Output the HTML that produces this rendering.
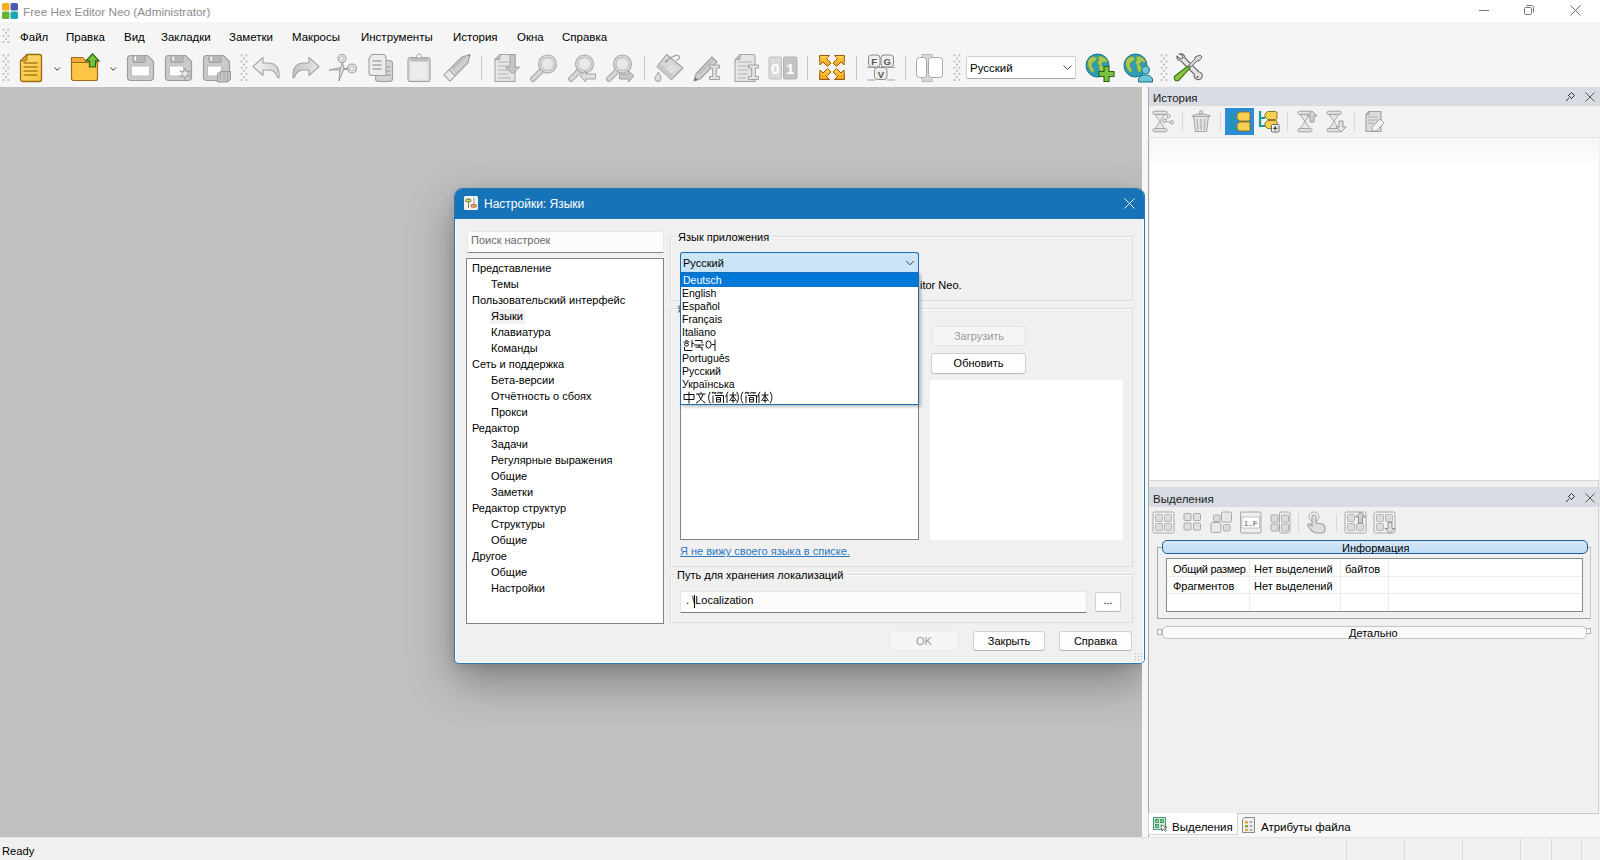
<!DOCTYPE html>
<html><head><meta charset="utf-8">
<style>
*{box-sizing:border-box;margin:0;padding:0}
html,body{width:1600px;height:860px;overflow:hidden;background:#f0f0f0;font-family:"Liberation Sans",sans-serif;font-size:11px;color:#000}
.a{position:absolute}
.t{position:absolute;white-space:nowrap;line-height:12px}
svg{position:absolute;overflow:visible}
.m{position:absolute;white-space:nowrap;line-height:12px;font-size:11.5px;top:31px}
.tr{position:absolute;white-space:nowrap;line-height:12px;font-size:11px}
.btn{position:absolute;background:#fdfdfd;border:1px solid #d0d0d0;border-bottom-color:#b8b8b8;border-radius:3px;text-align:center;font-size:11px;line-height:18px}
.sep{position:absolute;width:1px;background:#c8c8c8}
.grip{position:absolute;width:6px;background-image:radial-gradient(circle,#c4c4c4 1px,transparent 1.3px);background-size:3px 4px}
.dd{position:absolute;left:2px;white-space:nowrap;font-size:10.5px;line-height:13px;height:13px}
</style></head><body>
<!-- ===== title bar ===== -->
<div class="a" style="left:0;top:0;width:1600px;height:22px;background:#fff"></div>
<svg style="left:2px;top:3px" width="16" height="16" viewBox="0 0 16 16">
<rect x="0" y="0" width="7.5" height="7.5" rx="1.5" fill="#f0b020"/>
<rect x="8.5" y="0" width="7.5" height="7.5" rx="1.5" fill="#4a5cb0"/>
<rect x="0" y="8.5" width="7.5" height="7.5" rx="1.5" fill="#6ab033"/>
<rect x="8.5" y="8.5" width="7.5" height="7.5" rx="1.5" fill="#1aa8b8"/>
</svg>
<div class="t" style="left:23px;top:6px;font-size:11.75px;color:#8c8c8c">Free Hex Editor Neo (Administrator)</div>
<svg style="left:1479px;top:10px" width="12" height="2"><rect x="0" y="0" width="10" height="1" fill="#777"/></svg>
<svg style="left:1523px;top:4px" width="12" height="12" viewBox="0 0 12 12"><rect x="1.5" y="3.5" width="7" height="7" rx="1" fill="none" stroke="#777"/><path d="M3.5 1.5h5a2 2 0 0 1 2 2v5" fill="none" stroke="#777"/></svg>
<svg style="left:1570px;top:5px" width="12" height="12" viewBox="0 0 12 12"><path d="M0.5 0.5l10 10M10.5 0.5l-10 10" stroke="#666" stroke-width="1"/></svg>

<!-- ===== menu bar ===== -->
<div class="a" style="left:0;top:22px;width:1600px;height:65px;background:#f5f5f5"></div>
<div class="m" style="left:20px">Файл</div>
<div class="m" style="left:66px">Правка</div>
<div class="m" style="left:124px">Вид</div>
<div class="m" style="left:161px">Закладки</div>
<div class="m" style="left:229px">Заметки</div>
<div class="m" style="left:292px">Макросы</div>
<div class="m" style="left:361px">Инструменты</div>
<div class="m" style="left:453px">История</div>
<div class="m" style="left:517px">Окна</div>
<div class="m" style="left:562px">Справка</div>

<!-- ===== toolbar ===== -->
<!-- grippers -->
<svg style="left:0px;top:22px" width="10" height="28"><g fill="#c4c4c4"><rect x="2.5" y="6.6" width="2" height="2"/><rect x="7.3" y="6.6" width="2" height="2"/><rect x="5" y="9.7" width="2" height="2"/><rect x="2.5" y="12.8" width="2" height="2"/><rect x="7.3" y="12.8" width="2" height="2"/><rect x="5" y="15.9" width="2" height="2"/><rect x="2.5" y="19.0" width="2" height="2"/><rect x="7.3" y="19.0" width="2" height="2"/></g></svg>
<svg style="left:0px;top:50px" width="10" height="34"><g fill="#c4c4c4"><rect x="2.5" y="4.3" width="2" height="2"/><rect x="7.3" y="4.3" width="2" height="2"/><rect x="5" y="7.4" width="2" height="2"/><rect x="2.5" y="10.5" width="2" height="2"/><rect x="7.3" y="10.5" width="2" height="2"/><rect x="5" y="13.6" width="2" height="2"/><rect x="2.5" y="16.7" width="2" height="2"/><rect x="7.3" y="16.7" width="2" height="2"/><rect x="5" y="19.8" width="2" height="2"/><rect x="2.5" y="22.9" width="2" height="2"/><rect x="7.3" y="22.9" width="2" height="2"/><rect x="5" y="26.0" width="2" height="2"/><rect x="2.5" y="29.1" width="2" height="2"/><rect x="7.3" y="29.1" width="2" height="2"/></g></svg>
<svg style="left:238px;top:50px" width="10" height="34"><g fill="#c4c4c4"><rect x="2.5" y="4.3" width="2" height="2"/><rect x="7.3" y="4.3" width="2" height="2"/><rect x="5" y="7.4" width="2" height="2"/><rect x="2.5" y="10.5" width="2" height="2"/><rect x="7.3" y="10.5" width="2" height="2"/><rect x="5" y="13.6" width="2" height="2"/><rect x="2.5" y="16.7" width="2" height="2"/><rect x="7.3" y="16.7" width="2" height="2"/><rect x="5" y="19.8" width="2" height="2"/><rect x="2.5" y="22.9" width="2" height="2"/><rect x="7.3" y="22.9" width="2" height="2"/><rect x="5" y="26.0" width="2" height="2"/><rect x="2.5" y="29.1" width="2" height="2"/><rect x="7.3" y="29.1" width="2" height="2"/></g></svg>
<svg style="left:951px;top:50px" width="10" height="34"><g fill="#c4c4c4"><rect x="2.5" y="4.3" width="2" height="2"/><rect x="7.3" y="4.3" width="2" height="2"/><rect x="5" y="7.4" width="2" height="2"/><rect x="2.5" y="10.5" width="2" height="2"/><rect x="7.3" y="10.5" width="2" height="2"/><rect x="5" y="13.6" width="2" height="2"/><rect x="2.5" y="16.7" width="2" height="2"/><rect x="7.3" y="16.7" width="2" height="2"/><rect x="5" y="19.8" width="2" height="2"/><rect x="2.5" y="22.9" width="2" height="2"/><rect x="7.3" y="22.9" width="2" height="2"/><rect x="5" y="26.0" width="2" height="2"/><rect x="2.5" y="29.1" width="2" height="2"/><rect x="7.3" y="29.1" width="2" height="2"/></g></svg>
<svg style="left:1158px;top:50px" width="10" height="34"><g fill="#c4c4c4"><rect x="2.5" y="4.3" width="2" height="2"/><rect x="7.3" y="4.3" width="2" height="2"/><rect x="5" y="7.4" width="2" height="2"/><rect x="2.5" y="10.5" width="2" height="2"/><rect x="7.3" y="10.5" width="2" height="2"/><rect x="5" y="13.6" width="2" height="2"/><rect x="2.5" y="16.7" width="2" height="2"/><rect x="7.3" y="16.7" width="2" height="2"/><rect x="5" y="19.8" width="2" height="2"/><rect x="2.5" y="22.9" width="2" height="2"/><rect x="7.3" y="22.9" width="2" height="2"/><rect x="5" y="26.0" width="2" height="2"/><rect x="2.5" y="29.1" width="2" height="2"/><rect x="7.3" y="29.1" width="2" height="2"/></g></svg>
<!-- separators -->
<div class="sep" style="left:481px;top:56px;height:24px"></div>
<div class="sep" style="left:644px;top:56px;height:24px"></div>
<div class="sep" style="left:807px;top:56px;height:24px"></div>
<div class="sep" style="left:856px;top:56px;height:24px"></div>
<div class="sep" style="left:905px;top:56px;height:24px"></div>

<!-- new doc -->
<svg style="left:18px;top:53px" width="26" height="30" viewBox="0 0 26 30">
<defs><linearGradient id="gy" x1="0" y1="0" x2="1" y2="1"><stop offset="0" stop-color="#fde07a"/><stop offset="1" stop-color="#f7c23c"/></linearGradient></defs>
<path d="M9 1.5h12.5a2 2 0 0 1 2 2v23a2 2 0 0 1-2 2h-17a2 2 0 0 1-2-2v-18.5z" fill="url(#gy)" stroke="#9a6c12" stroke-width="1.3"/>
<path d="M9 1.5v5a1.5 1.5 0 0 1-1.5 1.5h-5z" fill="#d9a030" stroke="#9a6c12" stroke-width="1"/>
<path d="M5.5 10h14M5.5 14h14M5.5 18h14M5.5 22h14" stroke="#b07c18" stroke-width="1.6"/>
</svg>
<svg style="left:54px;top:67px" width="7" height="5"><path d="M0.5 0.5l2.8 2.8l2.8-2.8" fill="none" stroke="#222" stroke-width="0.9"/></svg>
<!-- open folder -->
<svg style="left:70px;top:53px" width="30" height="29" viewBox="0 0 30 29">
<path d="M1.5 4.5h11l3 3h12v18a2 2 0 0 1-2 2h-22a2 2 0 0 1-2-2z" fill="#fbc646" stroke="#9a6c12" stroke-width="1.2"/>
<path d="M1.5 4.5h11l3 3h12v2h-26z" fill="#f2a93a" stroke="#9a6c12" stroke-width="1"/>
<path d="M22.5 0.8l6.5 7h-3.5v6.2h-6v-6.2h-3.5z" fill="#78c23a" stroke="#2a6010" stroke-width="1.2"/>
</svg>
<svg style="left:110px;top:67px" width="7" height="5"><path d="M0.5 0.5l2.8 2.8l2.8-2.8" fill="none" stroke="#222" stroke-width="0.9"/></svg>
<!-- save -->
<svg style="left:127px;top:54px" width="28" height="28" viewBox="0 0 28 28">
<path d="M3.5 1.5h17l6 6v16a3 3 0 0 1-3 3h-20a3 3 0 0 1-3-3v-19a3 3 0 0 1 3-3z" fill="#cacaca" stroke="#9c9c9c" stroke-width="1.2"/>
<path d="M6 1.5h12v6a1 1 0 0 1-1 1h-10a1 1 0 0 1-1-1z" fill="#b8b8b8" stroke="#a0a0a0"/>
<rect x="7.5" y="2.5" width="1.5" height="4" fill="#fff"/>
<rect x="4.5" y="12" width="18" height="10" fill="#fff" stroke="#bdbdbd"/>
</svg>
<!-- save as -->
<svg style="left:165px;top:54px" width="28" height="28" viewBox="0 0 28 28">
<path d="M3.5 1.5h17l6 6v16a3 3 0 0 1-3 3h-20a3 3 0 0 1-3-3v-19a3 3 0 0 1 3-3z" fill="#cacaca" stroke="#9c9c9c" stroke-width="1.2"/>
<path d="M6 1.5h12v6a1 1 0 0 1-1 1h-10a1 1 0 0 1-1-1z" fill="#b8b8b8" stroke="#a0a0a0"/>
<rect x="7.5" y="2.5" width="1.5" height="4" fill="#fff"/>
<rect x="4.5" y="12" width="14" height="10" fill="#fff" stroke="#bdbdbd"/>
<path d="M20 14l1.3 3.8l3.9-1l-2.8 2.9l2.8 2.9l-3.9-1l-1.3 3.8l-1.3-3.8l-3.9 1l2.8-2.9l-2.8-2.9l3.9 1z" fill="#e6e6e6" stroke="#9a9a9a" stroke-width="0.9"/>
</svg>
<!-- save all -->
<svg style="left:203px;top:54px" width="30" height="29" viewBox="0 0 30 29">
<path d="M3.5 1.5h17l6 6v16a3 3 0 0 1-3 3h-20a3 3 0 0 1-3-3v-19a3 3 0 0 1 3-3z" fill="#cacaca" stroke="#9c9c9c" stroke-width="1.2"/>
<path d="M6 1.5h12v6a1 1 0 0 1-1 1h-10a1 1 0 0 1-1-1z" fill="#b8b8b8" stroke="#a0a0a0"/>
<rect x="7.5" y="2.5" width="1.5" height="4" fill="#fff"/>
<rect x="4.5" y="12" width="14" height="10" fill="#fff" stroke="#bdbdbd"/>
<path d="M14.5 19.5l3-2h10v8l-3 2.5h-10z" fill="#c4c4c4" stroke="#9a9a9a"/><path d="M17.5 17.5v8M21 17.5v8M24.5 17.5v10" stroke="#a8a8a8"/>
</svg>
<!-- undo -->
<svg style="left:252px;top:56px" width="30" height="23" viewBox="0 0 30 23">
<defs><linearGradient id="gu" x1="0" y1="0" x2="1" y2="0"><stop offset="0" stop-color="#f2f2f2"/><stop offset="1" stop-color="#d6d6d6"/></linearGradient></defs>
<path d="M1 10.5l10-9v5.5h6a10 10 0 0 1 10 10v5l-2 -1.5a8 8 0 0 0-8-6.5h-6v5.5z" fill="url(#gu)" stroke="#a4a4a4" stroke-width="1.1" stroke-linejoin="round"/>
</svg>
<!-- redo -->
<svg style="left:290px;top:56px" width="30" height="23" viewBox="0 0 30 23">
<defs><linearGradient id="gr" x1="0" y1="0" x2="1" y2="0"><stop offset="0" stop-color="#c4c4c4"/><stop offset="1" stop-color="#e8e8e8"/></linearGradient></defs>
<path d="M29 10.5l-10-9v5.5h-6a10 10 0 0 0-10 10v5l2-1.5a8 8 0 0 1 8-6.5h6v5.5z" fill="url(#gr)" stroke="#a4a4a4" stroke-width="1.1" stroke-linejoin="round"/>
</svg>
<!-- scissors -->
<svg style="left:328px;top:53px" width="30" height="29" viewBox="0 0 30 29">
<circle cx="14" cy="5.5" r="4" fill="#e6e6e6" stroke="#a0a0a0" stroke-width="1.1"/><circle cx="14" cy="5.5" r="1.8" fill="#fff" stroke="#a8a8a8" stroke-width="0.8"/>
<circle cx="24" cy="15.5" r="4.5" fill="#e6e6e6" stroke="#a0a0a0" stroke-width="1.1"/><circle cx="24" cy="15.5" r="2" fill="#fff" stroke="#a8a8a8" stroke-width="0.8"/>
<path d="M1 17l13-2.5l6.5 1.5l-8 1z" fill="#e0e0e0" stroke="#9c9c9c" stroke-width="1"/>
<path d="M14.5 9.5l1.5 6l-5 12.5l1-12z" fill="#e0e0e0" stroke="#9c9c9c" stroke-width="1"/>
</svg>
<!-- copy -->
<svg style="left:367px;top:53px" width="28" height="30" viewBox="0 0 28 30">
<path d="M11.5 7.5h11a3 3 0 0 1 3 3v15a3 3 0 0 1-3 3h-11a3 3 0 0 1-3-3z" fill="#d4d4d4" stroke="#a0a0a0" stroke-width="1.1"/>
<path d="M5 1.5h11a3 3 0 0 1 3 3v18h-14a3 3 0 0 1-3-3v-14z" fill="#ececec" stroke="#a0a0a0" stroke-width="1.1"/>
<path d="M5.5 8h9M5.5 12h9M5.5 16h9M19.5 14h4M19.5 18h4M19.5 22h4" stroke="#a8a8a8" stroke-width="1.3"/>
</svg>
<!-- clipboard -->
<svg style="left:407px;top:53px" width="24" height="30" viewBox="0 0 24 30">
<path d="M3.5 4.5h17a2.5 2.5 0 0 1 2.5 2.5v19a2.5 2.5 0 0 1-2.5 2.5h-17a2.5 2.5 0 0 1-2.5-2.5v-19a2.5 2.5 0 0 1 2.5-2.5z" fill="#dedede" stroke="#a0a0a0" stroke-width="1.1"/>
<rect x="3.5" y="8.5" width="17" height="18" fill="#ececec"/>
<path d="M3 5h18v3.5h-18z" fill="#bdbdbd"/>
<circle cx="12" cy="3.2" r="2.2" fill="#fff" stroke="#a0a0a0"/>
</svg>
<!-- pencil -->
<svg style="left:442px;top:53px" width="30" height="30" viewBox="0 0 30 30">
<path d="M8 28l-6-6l18-18l8-2.5l-2 8z" fill="#d0d0d0" stroke="#a0a0a0" stroke-width="1.1" stroke-linejoin="round"/>
<path d="M2 22l6 6l5-5l-6-6z" fill="#e8e8e8" stroke="#a0a0a0" stroke-width="1"/>
<path d="M26 2.5l2-0.5l-0.5 2z" fill="#777"/>
<path d="M11 16l12-12" stroke="#b8b8b8" stroke-width="1.2"/>
</svg>
<!-- doc arrow -->
<svg style="left:493px;top:53px" width="29" height="30" viewBox="0 0 29 30">
<path d="M7 1.5h15v27h-20v-22z" fill="#e4e4e4" stroke="#a4a4a4" stroke-width="1.1"/>
<path d="M7 1.5v5h-5z" fill="#c8c8c8" stroke="#a4a4a4"/>
<path d="M5 9h11M5 13h11M5 17h11M5 21h11M5 25h13" stroke="#b4b4b4" stroke-width="1.2"/>
<path d="M17 1.5h5v12.5h4.5l-7 7l-7-7h4.5z" fill="#c6c6c6" stroke="#a0a0a0" stroke-width="1"/>
</svg>
<!-- find -->
<svg style="left:529px;top:53px" width="30" height="30" viewBox="0 0 30 30">
<path d="M11.5 18.5L4 26" stroke="#a4a4a4" stroke-width="5.6" stroke-linecap="round"/><path d="M11.5 18.5L4 26" stroke="#d8d8d8" stroke-width="3.6" stroke-linecap="round"/>
<circle cx="18.5" cy="11" r="9" fill="#dcdcdc" stroke="#a8a8a8" stroke-width="1.1"/>
<circle cx="18.5" cy="11" r="6.5" fill="#e8e8e8" stroke="#b4b4b4" stroke-width="1"/>
</svg>
<!-- find prev -->
<svg style="left:567px;top:53px" width="30" height="30" viewBox="0 0 30 30">
<path d="M11.5 18.5L4 26" stroke="#a4a4a4" stroke-width="5.6" stroke-linecap="round"/><path d="M11.5 18.5L4 26" stroke="#d8d8d8" stroke-width="3.6" stroke-linecap="round"/>
<circle cx="17.5" cy="11" r="9" fill="#dcdcdc" stroke="#a8a8a8" stroke-width="1.1"/>
<circle cx="17.5" cy="11" r="6.5" fill="#e8e8e8" stroke="#b4b4b4" stroke-width="1"/>
<path d="M13 23l5.5-5v3h10v5h-10v3z" fill="#dedede" stroke="#a4a4a4" stroke-width="1"/>
</svg>
<!-- find next -->
<svg style="left:605px;top:53px" width="30" height="30" viewBox="0 0 30 30">
<path d="M11.5 18.5L4 26" stroke="#a4a4a4" stroke-width="5.6" stroke-linecap="round"/><path d="M11.5 18.5L4 26" stroke="#d8d8d8" stroke-width="3.6" stroke-linecap="round"/>
<circle cx="17.5" cy="11" r="9" fill="#dcdcdc" stroke="#a8a8a8" stroke-width="1.1"/>
<circle cx="17.5" cy="11" r="6.5" fill="#e8e8e8" stroke="#b4b4b4" stroke-width="1"/>
<path d="M29 23l-5.5-5v3h-9v5h9v3z" fill="#c8c8c8" stroke="#a0a0a0" stroke-width="1"/>
</svg>
<!-- bucket -->
<svg style="left:654px;top:53px" width="30" height="30" viewBox="0 0 30 30">
<path d="M12.5 1.5l16.5 13.5l-11.5 11.5l-14.5-13z" fill="#d6d6d6" stroke="#a0a0a0" stroke-width="1.1" stroke-linejoin="round"/>
<path d="M3 13.5l3-3l14.5 13l-3 3z" fill="#c8c8c8"/>
<path d="M12 8.5c3-3 9-7 12-6c3 1 1 4-2 5" fill="none" stroke="#a0a0a0" stroke-width="1.1"/>
<circle cx="12" cy="8.5" r="1" fill="#888"/>
<path d="M13 17l6-5M15.5 19.5l6-5" stroke="#ececec" stroke-width="1.5"/>
<path d="M4.5 19c-2 3-3.5 5-3.5 6.5a3 3 0 0 0 6 0c0-1.5-1-3.5-2.5-6.5z" fill="#dedede" stroke="#a0a0a0" stroke-width="1"/>
</svg>
<!-- pencil I -->
<svg style="left:692px;top:53px" width="30" height="30" viewBox="0 0 30 30">
<path d="M2 28l2-7l16-17l5 5l-17 17z" fill="#d0d0d0" stroke="#a0a0a0" stroke-width="1.1" stroke-linejoin="round"/>
<path d="M2 28l1-4l3 3z" fill="#777"/>
<path d="M7 21l14-14" stroke="#b8b8b8" stroke-width="1.2"/>
<path d="M17.5 12h10v3h-3.2v8.5h3.2v3h-10v-3h3.2v-8.5h-3.2z" fill="#e4e4e4" stroke="#a0a0a0" stroke-width="1"/>
</svg>
<!-- doc I -->
<svg style="left:733px;top:53px" width="28" height="30" viewBox="0 0 28 30">
<path d="M7 1.5h13a2 2 0 0 1 2 2v25h-20v-21z" fill="#e4e4e4" stroke="#a4a4a4" stroke-width="1.1"/>
<path d="M7 1.5v5h-5z" fill="#c8c8c8" stroke="#a4a4a4"/>
<path d="M5 9h14M5 13h14M5 17h10M5 21h10M5 25h8" stroke="#b4b4b4" stroke-width="1.2"/>
<path d="M15.5 12h10v3h-3.2v8.5h3.2v3h-10v-3h3.2v-8.5h-3.2z" fill="#e4e4e4" stroke="#a0a0a0" stroke-width="1"/>
</svg>
<!-- 01 -->
<svg style="left:768px;top:56px" width="30" height="24" viewBox="0 0 30 24">
<rect x="1" y="1" width="12.5" height="22" rx="1.5" fill="#dadada" stroke="#c0c0c0"/>
<rect x="15.5" y="1" width="13.5" height="22" rx="1.5" fill="#c4c4c4" stroke="#b0b0b0"/>
<text x="7.2" y="17.5" font-family="Liberation Sans" font-weight="bold" font-size="15" fill="#fff" text-anchor="middle">0</text>
<text x="22.2" y="17.5" font-family="Liberation Sans" font-weight="bold" font-size="15" fill="#fff" text-anchor="middle">1</text>
</svg>
<!-- orange arrows -->
<svg style="left:818px;top:54px" width="28" height="27" viewBox="0 0 28 27">
<defs><linearGradient id="go" x1="0" y1="0" x2="0" y2="1"><stop offset="0" stop-color="#ffd34a"/><stop offset="1" stop-color="#f4a010"/></linearGradient></defs>
<g fill="url(#go)" stroke="#9a5a10" stroke-width="1" stroke-linejoin="round">
<path d="M1.5 1.5h10l-3 3l4.5 4.5l-3.5 3.5l-4.5-4.5l-3 3z"/>
<path d="M26.5 1.5h-10l3 3l-4.5 4.5l3.5 3.5l4.5-4.5l3 3z"/>
<path d="M1.5 25.5h10l-3-3l4.5-4.5l-3.5-3.5l-4.5 4.5l-3-3z"/>
<path d="M26.5 25.5h-10l3-3l-4.5-4.5l3.5-3.5l4.5 4.5l3-3z"/>
</g>
</svg>
<!-- FGV -->
<svg style="left:867px;top:54px" width="28" height="28" viewBox="0 0 28 28">
<rect x="1.5" y="1" width="11.5" height="12" rx="3" fill="#eeeeee" stroke="#8a8a8a"/>
<rect x="14" y="1" width="12.5" height="12" rx="3" fill="#eeeeee" stroke="#8a8a8a"/>
<rect x="7.5" y="13.5" width="12.5" height="12" rx="3" fill="#eeeeee" stroke="#8a8a8a"/>
<text x="7.2" y="11" font-family="Liberation Sans" font-weight="bold" font-size="9.5" fill="#555" text-anchor="middle">F</text>
<text x="20.2" y="11" font-family="Liberation Sans" font-weight="bold" font-size="9.5" fill="#555" text-anchor="middle">G</text>
<text x="13.8" y="23.5" font-family="Liberation Sans" font-weight="bold" font-size="9.5" fill="#555" text-anchor="middle">V</text>
<path d="M0 13.5h8M20 13.5h8M0 26h8M20 26h8" stroke="#9a9a9a" stroke-width="0.9"/>
</svg>
<!-- split -->
<svg style="left:915px;top:53px" width="30" height="30" viewBox="0 0 30 30">
<rect x="7" y="1.5" width="10" height="27" fill="#d8d8d8" stroke="#b8b8b8"/>
<rect x="1.5" y="4.5" width="10" height="20" rx="3" fill="#fff" stroke="#a8a8a8"/>
<rect x="13.5" y="4.5" width="14" height="20" rx="3" fill="#fff" stroke="#a8a8a8"/>
</svg>
<!-- combo -->
<div class="a" style="left:966px;top:56px;width:110px;height:23px;background:#fff;border:1px solid #d0d0d0;border-bottom-color:#a8a8a8;border-radius:2px"></div>
<div class="t" style="left:970px;top:62px;font-size:11.5px">Русский</div>
<svg style="left:1063px;top:65px" width="9" height="6"><path d="M0.5 0.5l4 4l4-4" fill="none" stroke="#555" stroke-width="1"/></svg>
<!-- globe + -->
<svg style="left:1085px;top:53px" width="30" height="30" viewBox="0 0 30 30">
<circle cx="12.5" cy="12.5" r="11.5" fill="#2aa0b8" stroke="#1a7090" stroke-width="1"/>
<path d="M5 5c3-2 6-2 7 1c-1 3-5 2-5 6c0 3 3 4 2 7c-2 1-4-1-5-4c-2-4-2-7 1-10zM14 3c4 0 7 2 9 6c-2 1-4-1-6 1c-1 2 1 4 3 5c-1 3-3 5-5 4c0-3-2-4-1-7c-2-1-2-4 0-5c-1-2-1-3 0-4z" fill="#a8c850" stroke="#6a9030" stroke-width="0.6"/>
<path d="M19 13.5h5v5h5v5h-5v5h-5v-5h-5v-5h5z" fill="#78c43c" stroke="#2a6010" stroke-width="1.1" stroke-linejoin="round"/>
</svg>
<!-- globe person -->
<svg style="left:1123px;top:53px" width="30" height="30" viewBox="0 0 30 30">
<circle cx="12.5" cy="12.5" r="11.5" fill="#2aa0b8" stroke="#1a7090" stroke-width="1"/>
<path d="M5 5c3-2 6-2 7 1c-1 3-5 2-5 6c0 3 3 4 2 7c-2 1-4-1-5-4c-2-4-2-7 1-10zM14 3c4 0 7 2 9 6c-2 1-4-1-6 1c-1 2 1 4 3 5c-1 3-3 5-5 4c0-3-2-4-1-7c-2-1-2-4 0-5c-1-2-1-3 0-4z" fill="#a8c850" stroke="#6a9030" stroke-width="0.6"/>
<circle cx="22.5" cy="17" r="4" fill="#6cc8d8" stroke="#1a7080" stroke-width="1"/>
<path d="M15.5 29v-2c0-3 3-5 7-5s7 2 7 5v2z" fill="#6cc8d8" stroke="#1a7080" stroke-width="1"/>
</svg>
<!-- tools -->
<svg style="left:1173px;top:53px" width="30" height="30" viewBox="0 0 30 30">
<path d="M4 3l3 3l3-1l-1-3l-3-1c3-1 6 1 6 4l14 14c2 0 4 2 3 5c-1 3-4 3-6 2c-2-1-2-3-2-5l-13-13c-3 0-5-3-4-5z" fill="#e4e4e4" stroke="#6a6a6a" stroke-width="1.1" stroke-linejoin="round"/>
<path d="M27 2l2 2l-3 4l-2 0l-6 6l-2-2l6-6l0-2z" fill="#d8d8d8" stroke="#6a6a6a" stroke-width="1"/>
<path d="M15 13l2 2l-11 12c-1 1-3 1-4 0s-1-3 0-4z" fill="#8cc63f" stroke="#3a7010" stroke-width="1.1"/>
<circle cx="24.5" cy="24" r="1" fill="#555"/>
</svg>


<!-- ===== MDI ===== -->
<div class="a" style="left:0;top:87px;width:1142px;height:750px;background:#c0c0c0;overflow:hidden">
  <div class="a" style="left:454px;top:101px;width:690px;height:475px;border-radius:8px;box-shadow:0 18px 44px 0 rgba(0,0,0,0.34),0 3px 10px rgba(0,0,0,0.12)"></div>
</div>

<!-- ===== right dock ===== -->
<!-- dock container -->
<div class="a" style="left:1142px;top:87px;width:458px;height:750px;background:#f0f0f0"></div>
<div class="a" style="left:1142px;top:87px;width:6px;height:750px;background:#f6f6f6"></div>
<div class="a" style="left:1148px;top:87px;width:1px;height:750px;background:#a8a8a8"></div>
<div class="a" style="left:1598px;top:87px;width:1px;height:727px;background:#d0d0d0"></div>
<!-- История header -->
<div class="a" style="left:1149px;top:87px;width:451px;height:19px;background:#d7dce3"></div>
<div class="t" style="left:1153px;top:92px;font-size:11.5px;color:#1a1a1a">История</div>
<svg style="left:1565px;top:91px" width="11" height="11" viewBox="0 0 11 11"><path d="M1 10l3-3M3.5 4.5l3-3l3 3l-3 3z M3 4l4 4" fill="none" stroke="#333" stroke-width="1"/></svg>
<svg style="left:1585px;top:92px" width="10" height="10" viewBox="0 0 10 10"><path d="M0.5 0.5l9 9M9.5 0.5l-9 9" stroke="#555" stroke-width="1"/></svg>
<!-- toolbar -->
<div class="a" style="left:1149px;top:106px;width:451px;height:31px;background:#f2f2f2"></div>
<div class="a" style="left:1148px;top:137px;width:451px;height:1px;background:#e4e4e4"></div>
<div class="sep" style="left:1182px;top:112px;height:19px;background:#d8d8d8"></div>
<div class="sep" style="left:1220px;top:112px;height:19px;background:#d8d8d8"></div>
<div class="sep" style="left:1287px;top:112px;height:19px;background:#d8d8d8"></div>
<div class="sep" style="left:1354px;top:112px;height:19px;background:#d8d8d8"></div>
<!-- hourglass nodes -->
<svg style="left:1152px;top:110px" width="23" height="23" viewBox="0 0 23 23">
<path d="M2.8 4.2h10.4l-5.2 7.3zM2.8 18.8h10.4l-5.2-7.3z" fill="#e6e6e6" stroke="#a8a8a8" stroke-width="1"/><rect x="1" y="1.2" width="14" height="3.2" rx="1.3" fill="#e2e2e2" stroke="#a0a0a0"/><rect x="1" y="18.6" width="14" height="3.2" rx="1.3" fill="#e2e2e2" stroke="#a0a0a0"/>
<path d="M16.5 6.5l-3.5 4.5l6 1.5" fill="none" stroke="#a8a8a8"/>
<circle cx="16.5" cy="6" r="1.7" fill="#f0f0f0" stroke="#a0a0a0"/><circle cx="12.5" cy="11" r="1.7" fill="#f0f0f0" stroke="#a0a0a0"/><circle cx="19.8" cy="12.3" r="1.7" fill="#f0f0f0" stroke="#a0a0a0"/>
</svg>
<!-- trash -->
<svg style="left:1191px;top:110px" width="21" height="23" viewBox="0 0 21 23">
<circle cx="10" cy="2.5" r="1.8" fill="#dcdcdc" stroke="#a8a8a8"/>
<path d="M0.8 6.5c1-3 18-3 19 0z" fill="#e0e0e0" stroke="#a8a8a8"/>
<path d="M2.5 6.5l2 15h11l2-15z" fill="#e4e4e4" stroke="#a8a8a8" stroke-width="1.1"/>
<path d="M6 9l1 11M10 9v11M14 9l-1 11" stroke="#b0b0b0" stroke-width="1.2"/>
</svg>
<!-- selected tree -->
<div class="a" style="left:1225px;top:108px;width:29px;height:27px;background:#2d8ad5"></div>
<svg style="left:1229px;top:111px" width="22" height="22" viewBox="0 0 22 22">
<path d="M3 1v17h5" fill="none" stroke="#1a9a9a" stroke-width="2.2"/><path d="M3 8h5" stroke="#1a9a9a" stroke-width="2"/>
<path d="M8 3.5l2.5-2.5h9a1.5 1.5 0 0 1 1.5 1.5v6a1.5 1.5 0 0 1-1.5 1.5h-9l-2.5-2.5z" fill="#f8d050" stroke="#8a6a10" stroke-width="0.9"/>
<path d="M8 13.5l2.5-2.5h9a1.5 1.5 0 0 1 1.5 1.5v6a1.5 1.5 0 0 1-1.5 1.5h-9l-2.5-2.5z" fill="#f8d050" stroke="#8a6a10" stroke-width="0.9"/>
</svg>
<!-- tree plus -->
<svg style="left:1258px;top:110px" width="22" height="23" viewBox="0 0 22 23">
<path d="M2 1v15h5" fill="none" stroke="#1a9a9a" stroke-width="2.2"/><path d="M2 8h5" stroke="#1a9a9a" stroke-width="2"/>
<path d="M7 4l2.5-2.5h8a1.5 1.5 0 0 1 1.5 1.5v5a1.5 1.5 0 0 1-1.5 1.5h-8l-2.5-2.5z" fill="#f8d050" stroke="#8a6a10" stroke-width="0.9"/>
<path d="M7 13l2.5-2.5h8a1.5 1.5 0 0 1 1.5 1.5v5a1.5 1.5 0 0 1-1.5 1.5h-8l-2.5-2.5z" fill="#f8d050" stroke="#8a6a10" stroke-width="0.9"/>
<rect x="13.5" y="14.5" width="7.5" height="7.5" rx="1" fill="#f6f6f6" stroke="#666"/>
<path d="M17.2 16v4.5M15 18.2h4.5" stroke="#333" stroke-width="1.1"/>
</svg>
<!-- hourglass up -->
<svg style="left:1297px;top:110px" width="21" height="23" viewBox="0 0 21 23">
<path d="M2.8 4.2h10.4l-5.2 7.3zM2.8 18.8h10.4l-5.2-7.3z" fill="#e6e6e6" stroke="#a8a8a8" stroke-width="1"/><rect x="1" y="1.2" width="14" height="3.2" rx="1.3" fill="#e2e2e2" stroke="#a0a0a0"/><rect x="1" y="18.6" width="14" height="3.2" rx="1.3" fill="#e2e2e2" stroke="#a0a0a0"/>
<path d="M15 1l5 5h-3v6h-4v-6h-3z" fill="#d0d0d0" stroke="#9a9a9a"/>
</svg>
<!-- hourglass down -->
<svg style="left:1326px;top:110px" width="21" height="23" viewBox="0 0 21 23">
<path d="M2.8 4.2h10.4l-5.2 7.3zM2.8 18.8h10.4l-5.2-7.3z" fill="#e6e6e6" stroke="#a8a8a8" stroke-width="1"/><rect x="1" y="1.2" width="14" height="3.2" rx="1.3" fill="#e2e2e2" stroke="#a0a0a0"/><rect x="1" y="18.6" width="14" height="3.2" rx="1.3" fill="#e2e2e2" stroke="#a0a0a0"/>
<path d="M15 22l5-5h-3v-6h-4v6h-3z" fill="#e4e4e4" stroke="#9a9a9a"/>
</svg>
<!-- doc eraser -->
<svg style="left:1364px;top:110px" width="21" height="23" viewBox="0 0 21 23">
<path d="M5 1.5h12v20h-15v-17z" fill="#dcdcdc" stroke="#a0a0a0" stroke-width="1.1"/>
<path d="M5 1.5v3h-3z" fill="#c0c0c0" stroke="#a0a0a0"/>
<path d="M4 7h10M4 10h10M4 13h6" stroke="#b0b0b0"/>
<path d="M8 17l8-8l4 4l-8 8h-4z" fill="#f4f4f4" stroke="#a0a0a0"/>
</svg>

<!-- white content -->
<div class="a" style="left:1150px;top:138px;width:449px;height:343px;background:linear-gradient(#f7f7f7 0,#fbfbfb 20px,#fff 28px,#fff)"></div>
<div class="a" style="left:1149px;top:480px;width:450px;height:1px;background:#d4d4d4"></div>
<!-- Выделения header -->
<div class="a" style="left:1149px;top:487px;width:451px;height:20px;background:#d7dce3"></div>
<div class="t" style="left:1153px;top:493px;font-size:11.5px;color:#1a1a1a">Выделения</div>
<svg style="left:1565px;top:492px" width="11" height="11" viewBox="0 0 11 11"><path d="M1 10l3-3M3.5 4.5l3-3l3 3l-3 3z M3 4l4 4" fill="none" stroke="#333" stroke-width="1"/></svg>
<svg style="left:1585px;top:493px" width="10" height="10" viewBox="0 0 10 10"><path d="M0.5 0.5l9 9M9.5 0.5l-9 9" stroke="#555" stroke-width="1"/></svg>
<div class="sep" style="left:1298px;top:514px;height:18px;background:#d8d8d8"></div>
<div class="sep" style="left:1336px;top:514px;height:18px;background:#d8d8d8"></div>
<svg style="left:1152px;top:511px" width="23" height="23" viewBox="0 0 23 23">
<rect x="1" y="1" width="21" height="21" rx="1.5" fill="#f2f2f2" stroke="#a8a8a8"/>
<rect x="3.5" y="3.5" width="7" height="7" rx="1" fill="#dcdcdc" stroke="#b4b4b4"/><rect x="12.5" y="3.5" width="7" height="7" rx="1" fill="#dcdcdc" stroke="#b4b4b4"/>
<rect x="3.5" y="12.5" width="7" height="7" rx="1" fill="#dcdcdc" stroke="#b4b4b4"/><rect x="12.5" y="12.5" width="7" height="7" rx="1" fill="#dcdcdc" stroke="#b4b4b4"/>
</svg>
<svg style="left:1183px;top:512px" width="19" height="20" viewBox="0 0 19 20">
<rect x="1" y="1.5" width="7" height="7" rx="1" fill="#e0e0e0" stroke="#a8a8a8"/><rect x="10.5" y="1.5" width="7" height="7" rx="1" fill="#e0e0e0" stroke="#a8a8a8"/>
<rect x="1" y="11" width="7" height="7" rx="1" fill="#e0e0e0" stroke="#a8a8a8"/><rect x="10.5" y="11" width="7" height="7" rx="1" fill="#e0e0e0" stroke="#a8a8a8"/>
</svg>
<svg style="left:1210px;top:511px" width="23" height="23" viewBox="0 0 23 23">
<rect x="11.5" y="1" width="10" height="10" rx="1.5" fill="#e8e8e8" stroke="#a8a8a8"/>
<rect x="1" y="11.5" width="10" height="10" rx="1.5" fill="#e8e8e8" stroke="#a8a8a8"/>
<rect x="3.5" y="4" width="6.5" height="6.5" rx="1" fill="#dcdcdc" stroke="#b0b0b0"/><rect x="13.5" y="13.5" width="6.5" height="6.5" rx="1" fill="#dcdcdc" stroke="#b0b0b0"/>
</svg>
<svg style="left:1240px;top:511px" width="22" height="23" viewBox="0 0 22 23">
<rect x="0.5" y="1" width="20.5" height="21" rx="1" fill="#eeeeee" stroke="#a8a8a8"/>
<rect x="2" y="6" width="17.5" height="11" fill="#fff" stroke="#b0b0b0" stroke-width="0.8"/>
<text x="10.7" y="15" font-family="Liberation Sans" font-size="8" fill="#8a8a8a" text-anchor="middle" font-weight="bold">1..F</text>
</svg>
<svg style="left:1270px;top:511px" width="21" height="23" viewBox="0 0 21 23">
<rect x="9.5" y="1" width="10.5" height="21" rx="1.5" fill="#f0f0f0" stroke="#a8a8a8"/>
<rect x="1" y="4" width="7" height="7" rx="1" fill="#dcdcdc" stroke="#a8a8a8"/><rect x="11.5" y="4" width="7" height="7" rx="1" fill="#dcdcdc" stroke="#b0b0b0"/>
<rect x="1" y="13" width="7" height="7" rx="1" fill="#dcdcdc" stroke="#a8a8a8"/><rect x="11.5" y="13" width="7" height="7" rx="1" fill="#dcdcdc" stroke="#b0b0b0"/>
</svg>
<svg style="left:1307px;top:511px" width="20" height="23" viewBox="0 0 20 23">
<circle cx="7" cy="6" r="5" fill="none" stroke="#b0b0b0"/>
<path d="M5 6a2 2 0 0 1 4 0v6l6 1c2 0.5 3 2 3 4v2c0 2-2 3-4 3h-5c-2 0-4-2-5-3l-3-4c-1-1 0-3 2-2l2 2z" fill="#dedede" stroke="#a0a0a0" stroke-width="1.1"/>
</svg>
<svg style="left:1344px;top:511px" width="23" height="23" viewBox="0 0 23 23">
<rect x="1" y="1" width="21" height="21" rx="1.5" fill="#f2f2f2" stroke="#a8a8a8"/>
<rect x="3.5" y="3.5" width="7" height="7" rx="1" fill="#dcdcdc" stroke="#b4b4b4"/>
<rect x="3.5" y="12.5" width="7" height="7" rx="1" fill="#dcdcdc" stroke="#b4b4b4"/><rect x="12.5" y="12.5" width="7" height="7" rx="1" fill="#dcdcdc" stroke="#b4b4b4"/>
<path d="M16.5 1l5 5h-3v6h-4v-6h-3z" fill="#cfcfcf" stroke="#909090"/>
</svg>
<svg style="left:1373px;top:511px" width="23" height="23" viewBox="0 0 23 23">
<rect x="1" y="1" width="21" height="21" rx="1.5" fill="#f2f2f2" stroke="#a8a8a8"/>
<rect x="3.5" y="3.5" width="7" height="7" rx="1" fill="#dcdcdc" stroke="#b4b4b4"/><rect x="12.5" y="3.5" width="7" height="7" rx="1" fill="#dcdcdc" stroke="#b4b4b4"/>
<rect x="3.5" y="12.5" width="7" height="7" rx="1" fill="#dcdcdc" stroke="#b4b4b4"/>
<path d="M17 22.5l5-5h-3v-6h-4v6h-3z" fill="#dedede" stroke="#909090"/>
</svg>

<!-- Информация -->
<div class="a" style="left:1157px;top:547px;width:434px;height:72px;border:1px solid #a8a8a8;border-right-color:#c8c8c8;border-bottom-color:#a0a0a0"></div>
<div class="a" style="left:1162px;top:540px;width:426px;height:14px;background:linear-gradient(#d5e8f8,#bfdcf5);border:1px solid #1d5f9c;border-radius:5px"></div>
<div class="t" style="left:1342px;top:542px;font-size:11px">Информация</div>
<div class="a" style="left:1166px;top:558px;width:417px;height:54px;background:#fff;border:1px solid #8a8a8a"></div>
<div class="a" style="left:1167px;top:576px;width:415px;height:1px;background:#ececec"></div>
<div class="a" style="left:1167px;top:593px;width:415px;height:1px;background:#ececec"></div>
<div class="a" style="left:1249px;top:559px;width:1px;height:52px;background:#ececec"></div>
<div class="a" style="left:1340px;top:559px;width:1px;height:52px;background:#ececec"></div>
<div class="a" style="left:1388px;top:559px;width:1px;height:52px;background:#ececec"></div>
<div class="t" style="left:1173px;top:563px;font-size:11px;letter-spacing:-0.3px">Общий размер</div>
<div class="t" style="left:1254px;top:563px;font-size:11px">Нет выделений</div>
<div class="t" style="left:1345px;top:563px;font-size:11px">байтов</div>
<div class="t" style="left:1173px;top:580px;font-size:11px">Фрагментов</div>
<div class="t" style="left:1254px;top:580px;font-size:11px">Нет выделений</div>
<!-- Детально -->
<div class="a" style="left:1157px;top:629px;width:5px;height:6px;border:1px solid #b0b0b0;background:#fff"></div>
<div class="a" style="left:1586px;top:628px;width:5px;height:6px;border:1px solid #b0b0b0;background:#fff"></div>
<div class="a" style="left:1162px;top:626px;width:425px;height:13px;background:#fafafa;border:1px solid #c4c4c4;border-radius:5px"></div>
<div class="t" style="left:1349px;top:627px;font-size:11px">Детально</div>
<!-- bottom panel border + tabs -->
<div class="a" style="left:1149px;top:814px;width:451px;height:23px;background:#f7f7f7"></div>
<div class="a" style="left:1149px;top:813px;width:450px;height:1px;background:#c8c8c8"></div>
<div class="a" style="left:1148px;top:813px;width:90px;height:22px;background:#fff;border:1px solid #d4d4d4;border-top:none"></div>
<svg style="left:1153px;top:817px" width="16" height="16" viewBox="0 0 16 16"><rect x="0.5" y="0.5" width="12" height="12" fill="#cfeadb" stroke="#4a9a70"/><rect x="2.5" y="2.5" width="3" height="3" fill="#7ccf9c" stroke="#3b8a60" stroke-width="0.8"/><rect x="7.5" y="2.5" width="3" height="3" fill="#7ccf9c" stroke="#3b8a60" stroke-width="0.8"/><rect x="2.5" y="7.5" width="3" height="3" fill="#7ccf9c" stroke="#3b8a60" stroke-width="0.8"/><path d="M8 8l6 2l-2.5 1l2 2.5l-1 1l-2-2.5l-1.5 2z" fill="#fff" stroke="#555" stroke-width="0.8"/></svg>
<div class="t" style="left:1172px;top:821px;font-size:11.5px">Выделения</div>
<svg style="left:1242px;top:817px" width="14" height="16" viewBox="0 0 14 16"><path d="M0.5 2.5l2-2h10v15h-12z" fill="#f0f0f0" stroke="#888"/><rect x="3" y="4" width="3" height="2.5" fill="#e0b030"/><rect x="3" y="8" width="3" height="2.5" fill="#70b040"/><rect x="3" y="12" width="3" height="2" fill="#e0b030"/><path d="M7.5 5h3M7.5 9h3M7.5 13h3" stroke="#777"/></svg>
<div class="t" style="left:1261px;top:821px;font-size:11.5px">Атрибуты файла</div>
<!-- status bar separators -->


<!-- ===== status bar ===== -->
<div class="a" style="left:0;top:837px;width:1600px;height:23px;background:#f0f0f0"></div>
<div class="t" style="left:2px;top:845px;font-size:11.2px">Ready</div>
<div class="a" style="left:0;top:837px;width:1600px;height:1px;background:#e2e2e2"></div>
<div class="a" style="left:1346px;top:839px;width:1px;height:21px;background:#dadada"></div>
<div class="a" style="left:1404px;top:839px;width:1px;height:21px;background:#dadada"></div>
<div class="a" style="left:1462px;top:839px;width:1px;height:21px;background:#dadada"></div>
<div class="a" style="left:1520px;top:839px;width:1px;height:21px;background:#dadada"></div>
<div class="a" style="left:1551px;top:839px;width:1px;height:21px;background:#dadada"></div>
<div class="a" style="left:1581px;top:839px;width:1px;height:21px;background:#dadada"></div>


<!-- ===== dialog ===== -->
<!-- dialog frame -->
<div class="a" style="left:454px;top:188px;width:691px;height:476px;background:#f0f0f0;border:1px solid #2a76b6;border-radius:8px 8px 5px 5px;overflow:hidden">
  <div class="a" style="left:0;top:0;width:689px;height:30px;background:#1773b7"></div>
  <div class="a" style="left:0;top:30px;width:689px;height:444px;border:1px solid #fafcff;border-top:none;border-radius:0 0 4px 4px"></div>
</div>
<!-- title -->
<svg style="left:464px;top:196px" width="14" height="14" viewBox="0 0 14 14">
<rect x="0" y="0" width="14" height="14" rx="1.5" fill="#f2f2f2"/>
<rect x="4" y="2" width="1" height="10" fill="#777"/><rect x="9.5" y="1.5" width="1" height="10" fill="#999"/>
<rect x="1.5" y="3.2" width="5.5" height="2.6" rx="1.2" fill="#c8d870" stroke="#606a20" stroke-width="0.8"/>
<rect x="7" y="8.5" width="5.5" height="2.6" rx="1.2" fill="#f8b070" stroke="#8a5020" stroke-width="0.8"/>
</svg>
<div class="t" style="left:484px;top:198px;font-size:12px;color:#fff">Настройки: Языки</div>
<svg style="left:1124px;top:198px" width="11" height="11" viewBox="0 0 11 11"><path d="M0.5 0.5l10 10M10.5 0.5l-10 10" stroke="#e8f8ff" stroke-width="1"/></svg>

<!-- search -->
<div class="a" style="left:467px;top:231px;width:197px;height:22px;background:#fcfcfc;border:1px solid #e8e8e8;border-bottom:1px solid #868686;border-radius:3px 3px 0 0"></div>
<div class="tr" style="left:471px;top:234px;color:#6a6a6a">Поиск настроек</div>

<!-- tree -->
<div class="a" style="left:466px;top:258px;width:198px;height:366px;background:#fff;border:1px solid #828282"></div>
<div class="a" style="left:490px;top:309px;width:35px;height:15px;background:#f2f2f2"></div>
<div class="tr" style="left:472px;top:262px">Представление</div>
<div class="tr" style="left:491px;top:278px">Темы</div>
<div class="tr" style="left:472px;top:294px">Пользовательский интерфейс</div>
<div class="tr" style="left:491px;top:310px">Языки</div>
<div class="tr" style="left:491px;top:326px">Клавиатура</div>
<div class="tr" style="left:491px;top:342px">Команды</div>
<div class="tr" style="left:472px;top:358px">Сеть и поддержка</div>
<div class="tr" style="left:491px;top:374px">Бета-версии</div>
<div class="tr" style="left:491px;top:390px">Отчётность о сбоях</div>
<div class="tr" style="left:491px;top:406px">Прокси</div>
<div class="tr" style="left:472px;top:422px">Редактор</div>
<div class="tr" style="left:491px;top:438px">Задачи</div>
<div class="tr" style="left:491px;top:454px">Регулярные выражения</div>
<div class="tr" style="left:491px;top:470px">Общие</div>
<div class="tr" style="left:491px;top:486px">Заметки</div>
<div class="tr" style="left:472px;top:502px">Редактор структур</div>
<div class="tr" style="left:491px;top:518px">Структуры</div>
<div class="tr" style="left:491px;top:534px">Общие</div>
<div class="tr" style="left:472px;top:550px">Другое</div>
<div class="tr" style="left:491px;top:566px">Общие</div>
<div class="tr" style="left:491px;top:582px">Настройки</div>

<!-- group frames -->
<div class="a" style="left:670px;top:236px;width:463px;height:65px;border:1px solid #dcdcdc;box-shadow:inset 1px 1px 0 #fff"></div>
<div class="a" style="left:676px;top:232px;width:96px;height:10px;background:#f0f0f0"></div>
<div class="tr" style="left:678px;top:231px">Язык приложения</div>
<div class="tr" style="left:920px;top:279px">itor Neo.</div>

<div class="a" style="left:670px;top:308px;width:463px;height:259px;border:1px solid #dcdcdc;box-shadow:inset 1px 1px 0 #fff"></div>
<div class="a" style="left:670px;top:574px;width:463px;height:49px;border:1px solid #dcdcdc;box-shadow:inset 1px 1px 0 #fff"></div>
<div class="a" style="left:675px;top:570px;width:172px;height:10px;background:#f0f0f0"></div>
<div class="tr" style="left:677px;top:569px">Путь для хранения локализаций</div>

<svg style="left:677px;top:304px" width="4" height="10" viewBox="0 0 4 10"><path d="M3.5 1.5c-2 0-2.5 3-0.5 3.5M3.5 5l-2 3.5" fill="none" stroke="#222" stroke-width="1"/></svg>
<!-- list box -->
<div class="a" style="left:680px;top:316px;width:239px;height:224px;background:#fff;border:1px solid #828282"></div>
<!-- right side buttons -->
<div class="btn" style="left:932px;top:326px;width:94px;height:20px;background:#f5f5f5;border-color:#e4e4e4;color:#9a9a9a">Загрузить</div>
<div class="btn" style="left:931px;top:353px;width:95px;height:21px">Обновить</div>
<div class="a" style="left:930px;top:380px;width:193px;height:160px;background:#fff"></div>

<div class="tr" style="left:680px;top:545px;color:#2a78c2;text-decoration:underline">Я не вижу своего языка в списке.</div>

<!-- path edit -->
<div class="a" style="left:680px;top:591px;width:407px;height:22px;background:#fcfcfc;border:1px solid #e6e6e6;border-bottom:1px solid #7c7c7c;border-radius:3px 3px 0 0"></div>
<div class="tr" style="left:686px;top:594px">.&nbsp;\Localization</div>
<div class="a" style="left:694px;top:595px;width:1px;height:13px;background:#000"></div>
<div class="btn" style="left:1095px;top:592px;width:26px;height:20px;line-height:14px">...</div>

<!-- bottom buttons -->
<div class="btn" style="left:889px;top:631px;width:70px;height:20px;background:#f5f5f5;border-color:#ececec;color:#9a9a9a">OK</div>
<div class="btn" style="left:973px;top:631px;width:72px;height:20px">Закрыть</div>
<div class="btn" style="left:1059px;top:631px;width:73px;height:20px">Справка</div>
<!-- grip -->
<div class="a" style="left:1134px;top:652px;width:8px;height:8px;background-image:radial-gradient(circle,#b8b8b8 0.8px,transparent 1px);background-size:3px 3px"></div>

<!-- combo -->
<div class="a" style="left:680px;top:252px;width:239px;height:21px;background:#cce4f7;border:1px solid #1c6cb4;border-bottom:none;border-radius:3px 3px 0 0"></div>
<div class="tr" style="left:683px;top:257px;font-size:11px">Русский</div>
<svg style="left:905px;top:260px" width="10" height="6" viewBox="0 0 10 6"><path d="M1 0.8l4 4l4-4" fill="none" stroke="#444" stroke-width="1"/></svg>
<!-- dropdown -->
<div class="a" style="left:680px;top:272px;width:239px;height:133px;background:#fff;border:1px solid #1c6cb4;box-shadow:2px 2px 3px rgba(0,0,0,0.25)"></div>
<div class="a" style="left:681px;top:273px;width:237px;height:14px;background:#0078d7"></div>
<div class="dd" style="left:683px;top:274px;color:#fff">Deutsch</div>
<div class="dd" style="left:682px;top:287px">English</div>
<div class="dd" style="left:682px;top:300px">Español</div>
<div class="dd" style="left:682px;top:313px">Français</div>
<div class="dd" style="left:682px;top:326px">Italiano</div>
<svg style="left:682px;top:339px" width="36" height="13" viewBox="0 0 36 13"><g fill="none" stroke="#111" stroke-width="1">
<path d="M3.5 1.5h2M1.5 3h6M10 1v7.5M10 4.5h1.8M2.5 8v3.5h8"/><ellipse cx="4.5" cy="5.6" rx="2" ry="1.5"/>
<path d="M13 1.5h7v2.8M12 6h10M17 6v2M13.5 8.2h6.5v3.5"/>
<ellipse cx="26.5" cy="5.5" rx="2.6" ry="3.6"/><path d="M33 0.5v11.5M29.5 5.5h3.5"/>
</g></svg>
<div class="dd" style="left:682px;top:352px">Português</div>
<div class="dd" style="left:682px;top:365px">Русский</div>
<div class="dd" style="left:682px;top:378px">Українська</div>
<svg style="left:682px;top:391px" width="95" height="13" viewBox="0 0 95 13"><g fill="none" stroke="#111" stroke-width="1"><path d="M2 3.5h10v5h-10zM7 0.8v11.7"/><path d="M19 0.8v1.7M14 3h9.5M16.5 3c1 4 3 7 7 9M21 3c-1 4-3 7-7 9"/><path d="M28.5 0.8c-2.5 3-2.5 8.5 0 11.5"/><path d="M31 0.8l-1 2M31 1.8h3.5M32.5 1.8l1 1.2M36.5 0.8l-1 2M36.5 1.8h4.5M38.5 1.8l1 1.2M31 4.5v7.5M33 4.5h8.5v7.5M34.5 6.5h4v4.5h-4zM34.5 8.7h4"/><path d="M46 0.8l-2.5 5M45 4v8M47.5 4h7M51 0.8v11.2M51 4.5l-3.5 5.5M51 4.5l3.5 5.5M49 9.5h4"/><path d="M54.5 0.8c2.5 3 2.5 8.5 0 11.5"/><path d="M61 0.8c-2.5 3-2.5 8.5 0 11.5"/><path d="M64 0.8l-1 2M64 1.8h3.5M65.5 1.8l1 1.2M69.5 0.8l-1 2M69.5 1.8h4.5M71.5 1.8l1 1.2M64 4.5v7.5M66 4.5h8.5v7.5M67.5 6.5h4v4.5h-4zM67.5 8.7h4"/><path d="M78 0.8l-2.5 5M77 4v8M79.5 4h7M83 0.8v11.2M83 4.5l-3.5 5.5M83 4.5l3.5 5.5M81 9.5h4"/><path d="M88 0.8c2.5 3 2.5 8.5 0 11.5"/></g></svg>

</body></html>
